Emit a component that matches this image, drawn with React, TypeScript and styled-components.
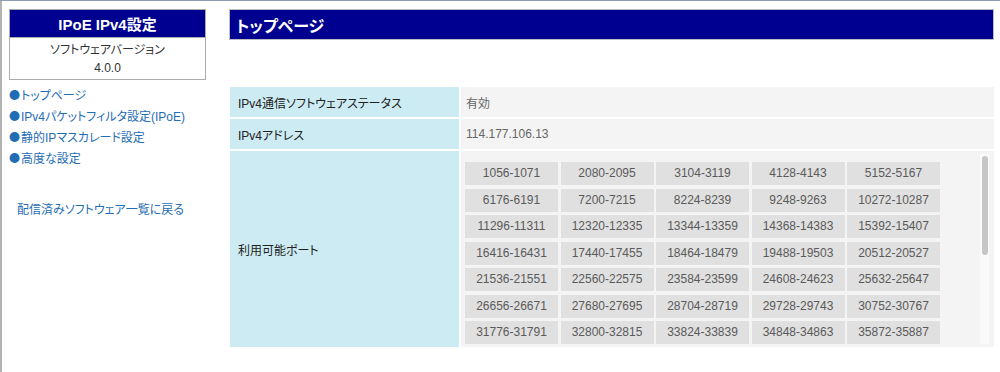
import React from "react";
import styled, { createGlobalStyle } from "styled-components";

const Global = createGlobalStyle`
  html, body { margin: 0; padding: 0; background: #fff; }
  body {
    border-top: 1px solid #8d9cb2;
    font-family: "Liberation Sans", "Noto Sans CJK JP", sans-serif;
    font-feature-settings: "palt";
    color: #333;
  }
`;

const Page = styled.div`
  display: flex;
  height: 371px;
  border-left: 2px solid #b3b3b3;
  box-sizing: border-box;
`;

const Sidebar = styled.aside`
  width: 227px;
  flex: none;
  padding: 8px 0 0 7px;
  box-sizing: border-box;
`;

const SideBox = styled.div`
  width: 197px;
  box-sizing: border-box;
  border: 1px solid #ababab;
`;

const SideHeader = styled.div`
  height: 27px;
  background: #000090;
  border-bottom: 1px solid #ababab;
  color: #fff;
  font-weight: bold;
  font-size: 15px;
  display: flex;
  align-items: center;
  justify-content: center;
`;

const Version = styled.div`
  padding: 3px 0 2px;
  text-align: center;
  font-size: 12px;
  line-height: 18px;
  color: #333;
`;

const Nav = styled.nav`
  margin-top: 4px;
  display: flex;
  flex-direction: column;
`;

const NavLink = styled.a`
  display: flex;
  align-items: center;
  height: 21px;
  font-size: 12px;
  color: #1f6db4;
  text-decoration: none;
  white-space: nowrap;
`;

const Bullet = styled.span`
  font-family: "Noto Sans CJK JP", sans-serif;
  font-feature-settings: normal;
  font-size: 11px;
  line-height: 1;
  margin-right: 1px;
`;

const BackLink = styled.a`
  display: flex;
  align-items: center;
  height: 21px;
  margin-top: 30px;
  padding-left: 8px;
  font-size: 12px;
  color: #1f6db4;
  text-decoration: none;
  white-space: nowrap;
`;

const Main = styled.main`
  flex: 1;
  padding: 8px 6px 0 0;
  box-sizing: border-box;
  min-width: 0;
`;

const TitleBar = styled.h1`
  margin: 0;
  height: 31px;
  box-sizing: border-box;
  border: 1px solid #bdbdbd;
  background: #000090;
  color: #fff;
  font-size: 16px;
  font-weight: bold;
  display: flex;
  align-items: center;
  padding-left: 6px;
`;

const InfoTable = styled.div`
  margin: 47px 0 0 1px;
  display: grid;
  grid-template-columns: 229px 1fr;
  gap: 2px;
`;

const LabelCell = styled.div<{ $h: number }>`
  height: ${(p) => p.$h}px;
  background: #cdebf2;
  padding-left: 8px;
  display: flex;
  align-items: center;
  font-size: 12px;
  color: #222;
`;

const ValueCell = styled.div`
  height: 30px;
  background: #f4f4f4;
  padding-left: 5px;
  display: flex;
  align-items: center;
  font-size: 12px;
  color: #666;
`;

const PortCell = styled.div`
  position: relative;
  height: 196px;
  background: #f4f4f4;
  padding: 3px 14px 3px 2px;
  box-sizing: border-box;
  min-width: 0;
`;

const PortScroll = styled.div`
  height: 190px;
  overflow-y: scroll;
  scrollbar-width: none;
  &::-webkit-scrollbar { display: none; }
`;

const ScrollTrack = styled.div`
  position: absolute;
  top: 3px;
  right: 5px;
  width: 9px;
  height: 190px;
  background: #fafafa;
`;

const ScrollThumb = styled.div`
  margin: 2px 0 0 2px;
  width: 6px;
  height: 99px;
  border-radius: 3px;
  background: #c6c6c6;
`;

const PortGrid = styled.div`
  display: grid;
  grid-template-columns: repeat(5, 93px);
  column-gap: 2.5px;
  row-gap: 3.5px;
  padding: 8px 0 8px 2px;
`;

const Port = styled.div`
  height: 23px;
  line-height: 23px;
  background: #e0e0e0;
  text-align: center;
  font-size: 12px;
  color: #5a5a5a;
`;

const ports = Array.from({ length: 63 }, (_, k) => {
  const s = 1056 + 1024 * k;
  return `${s}-${s + 15}`;
});

const navItems = [
  "トップページ",
  "IPv4パケットフィルタ設定(IPoE)",
  "静的IPマスカレード設定",
  "高度な設定",
];

export default function App() {
  return (
    <>
      <Global />
      <Page>
        <Sidebar>
          <SideBox>
            <SideHeader>IPoE IPv4設定</SideHeader>
            <Version>
              ソフトウェアバージョン
              <br />
              4.0.0
            </Version>
          </SideBox>
          <Nav>
            {navItems.map((t) => (
              <NavLink href="#" key={t}>
                <Bullet>●</Bullet>
                {t}
              </NavLink>
            ))}
          </Nav>
          <BackLink href="#">配信済みソフトウェア一覧に戻る</BackLink>
        </Sidebar>
        <Main>
          <TitleBar>トップページ</TitleBar>
          <InfoTable>
            <LabelCell $h={30}>IPv4通信ソフトウェアステータス</LabelCell>
            <ValueCell>有効</ValueCell>
            <LabelCell $h={30}>IPv4アドレス</LabelCell>
            <ValueCell>114.177.106.13</ValueCell>
            <LabelCell $h={196}>利用可能ポート</LabelCell>
            <PortCell>
              <PortScroll>
                <PortGrid>
                  {ports.map((p) => (
                    <Port key={p}>{p}</Port>
                  ))}
                </PortGrid>
              </PortScroll>
              <ScrollTrack>
                <ScrollThumb />
              </ScrollTrack>
            </PortCell>
          </InfoTable>
        </Main>
      </Page>
    </>
  );
}
